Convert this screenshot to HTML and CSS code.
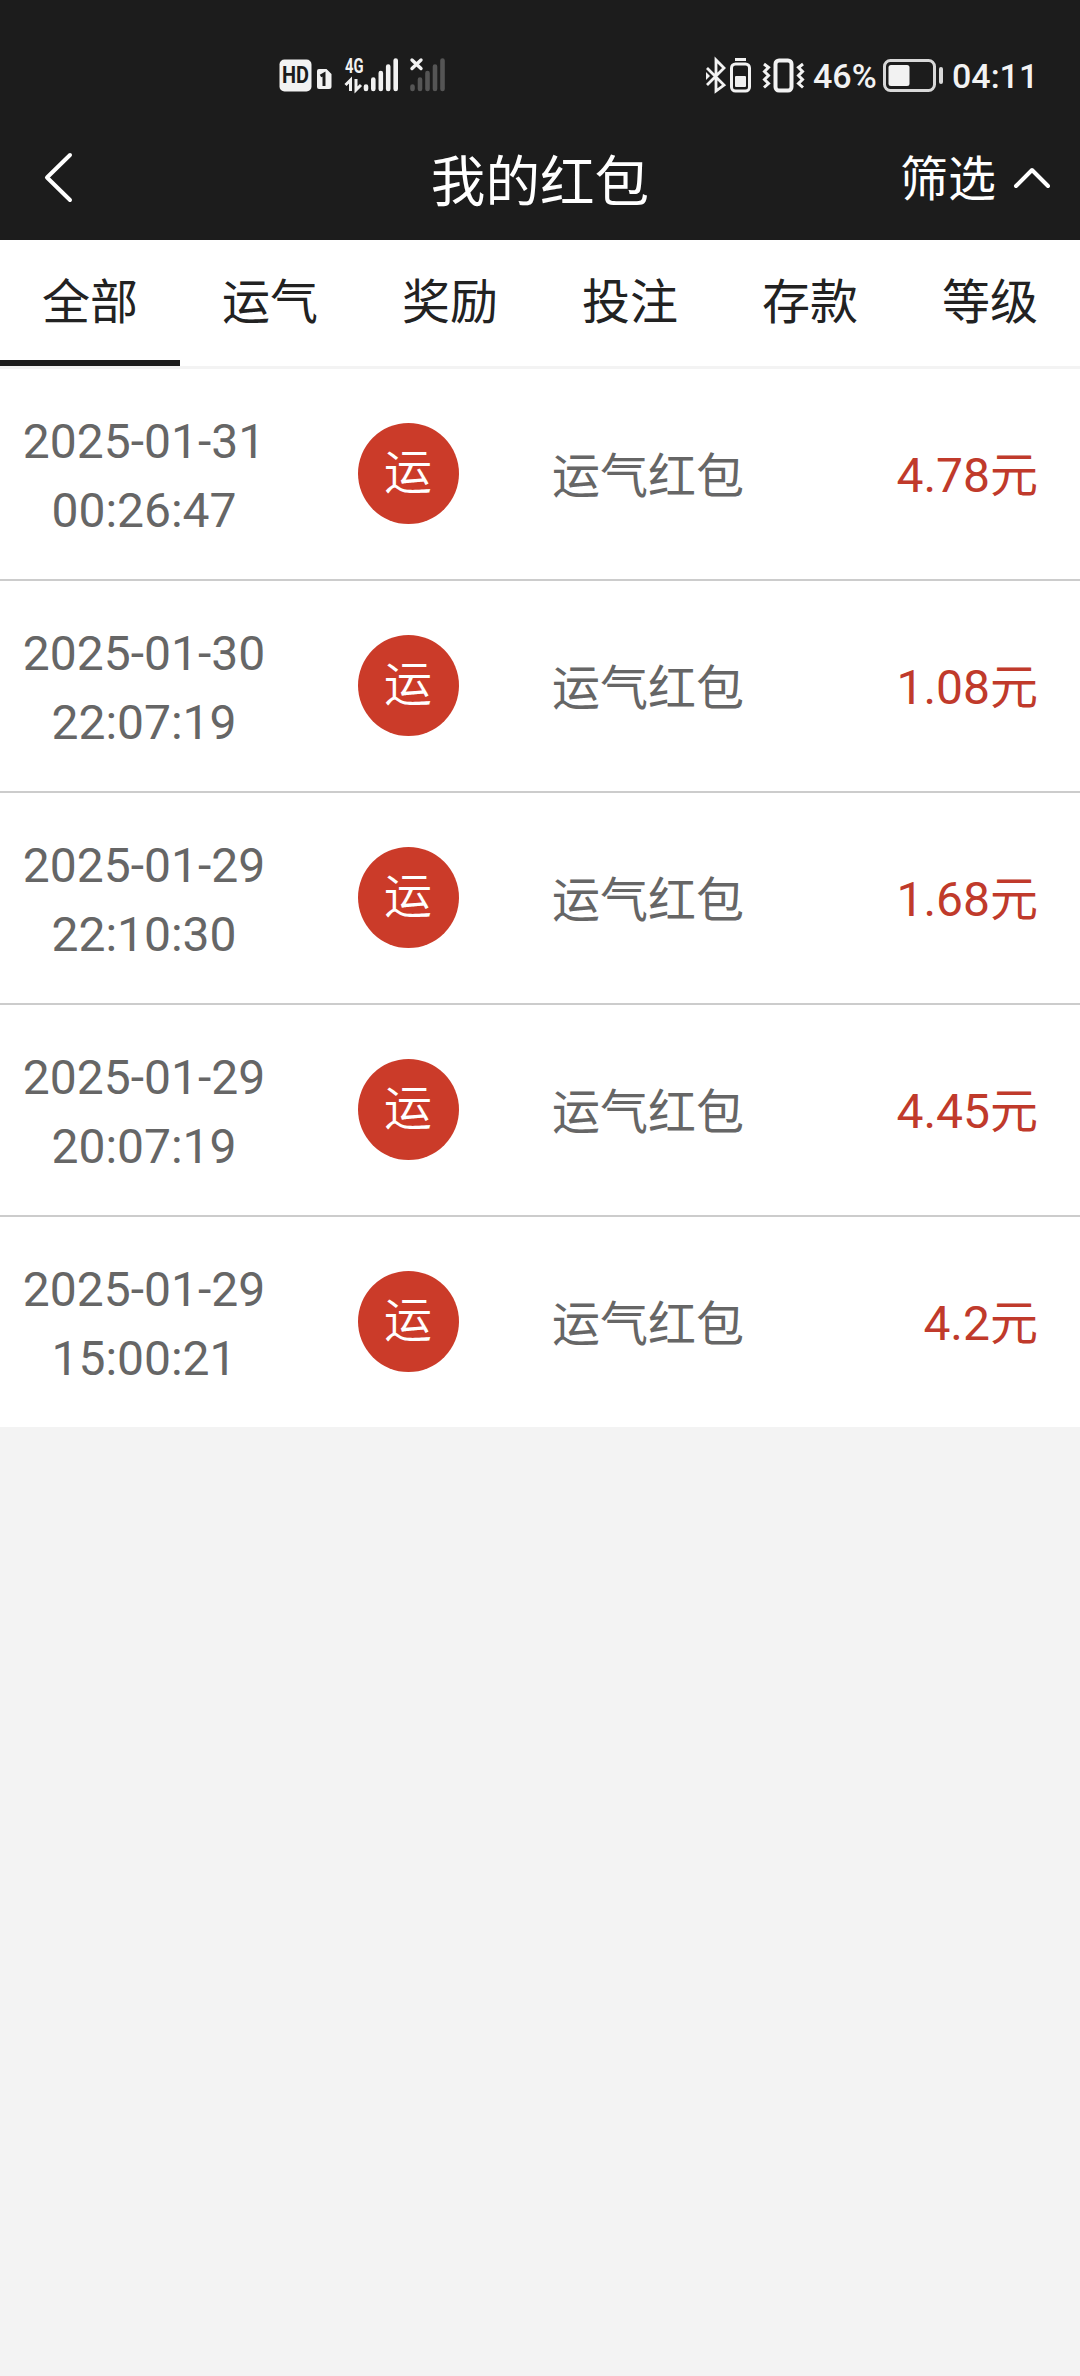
FILE: index.html
```html
<!DOCTYPE html>
<html lang="zh-CN">
<head>
<meta charset="utf-8">
<title>我的红包</title>
<link rel="stylesheet" href="styles.css">
</head>
<body>
<header class="top">
  <div class="status">
    <svg class="signals" width="170" height="40" viewBox="277 55 170 40">
      <rect x="279.5" y="59.5" width="32" height="32" rx="5" fill="#f2f2f2"/>
      <text x="295.5" y="82.5" class="hd" text-anchor="middle" textLength="27" lengthAdjust="spacingAndGlyphs">HD</text>
      <path d="M319 69h7.500l5 5v12.500a2.500 2.500 0 0 1-2.500 2.500h-10a2 2 0 0 1-2-2V71a2 2 0 0 1 2-2z" fill="#f2f2f2"/>
      <path d="M320.500 76l3.500-2v12" fill="none" stroke="#1c1c1c" stroke-width="3"/>
      <text x="345" y="72.500" class="net" textLength="18.500" lengthAdjust="spacingAndGlyphs">4G</text>
      <path d="M345.500 85l5-5v11M356 79v11l5-5" fill="none" stroke="#f2f2f2" stroke-width="3"/>
      <path d="M366 86.500v2.500M373.300 79.500V89M380.800 73V89M388.200 66.500V89M395.700 60.500V89" class="bars"/>
      <path d="M412 60l9 8.500M421 60l-9 8.500" stroke="#f2f2f2" stroke-width="3.400" stroke-linecap="round"/>
      <path d="M412.500 86.500v2.500M420 79.500V89M427.500 73V89M435 66.500V89M442.500 60.500V89" class="bars dim"/>
    </svg>
    <div class="status-right">
      <svg width="102" height="40" viewBox="704 55 102 40" fill="none" stroke="#f2f2f2">
        <path d="M707 68l17 17-8 6V60l8 8-17 17" stroke-width="2.800"/>
        <path d="M706 72v8l4-4z" fill="#f2f2f2" stroke="none"/>
        <path d="M735 59.500h11" stroke-width="3"/>
        <rect x="731.500" y="64" width="18" height="27" rx="4" stroke-width="3"/>
        <rect x="735" y="76" width="11" height="11" rx="1" fill="#f2f2f2" stroke="none"/>
        <rect x="775.500" y="60.500" width="16" height="30" rx="3.500" stroke-width="4"/>
        <path d="M764 64l4.500 3.500-4 4 4 4-4 4 4 4-4.500 4M803 64l-4.500 3.500 4 4-4 4 4 4-4 4 4.500 4" stroke-width="3"/>
      </svg>
      <span class="percent">46%</span>
      <svg class="battery" width="62" height="40" viewBox="882 55 62 40">
        <rect x="884.500" y="60.500" width="50" height="30" rx="6" fill="none" stroke="#d8d8d8" stroke-width="3"/>
        <rect x="888.500" y="65" width="21" height="21" rx="2.500" fill="#f2f2f2"/>
        <path d="M941 69v13" stroke="#d8d8d8" stroke-width="4" stroke-linecap="round"/>
      </svg>
      <span class="clock">04:11</span>
    </div>
  </div>
  <nav class="bar">
    <svg class="back" width="30" height="52" viewBox="0 0 30 52"><path d="M27 3L4 25.500 27 48"/></svg>
    <h1 class="title">我的红包</h1>
    <div class="filter"><span class="filter-label">筛选</span>
      <svg class="up" width="40" height="24" viewBox="0 0 40 24"><path d="M4 20L20 4l16 16"/></svg>
    </div>
  </nav>
</header>
<nav class="tabs">
  <span class="tab active">全部</span>
  <span class="tab">运气</span>
  <span class="tab">奖励</span>
  <span class="tab">投注</span>
  <span class="tab">存款</span>
  <span class="tab">等级</span>
</nav>
<main class="list">
  <div class="row"><time class="date">2025-01-31<br>00:26:47</time><span class="badge">运</span><span class="name">运气红包</span><span class="amount">4.78元</span></div>
  <div class="row"><time class="date">2025-01-30<br>22:07:19</time><span class="badge">运</span><span class="name">运气红包</span><span class="amount">1.08元</span></div>
  <div class="row"><time class="date">2025-01-29<br>22:10:30</time><span class="badge">运</span><span class="name">运气红包</span><span class="amount">1.68元</span></div>
  <div class="row"><time class="date">2025-01-29<br>20:07:19</time><span class="badge">运</span><span class="name">运气红包</span><span class="amount">4.45元</span></div>
  <div class="row"><time class="date">2025-01-29<br>15:00:21</time><span class="badge">运</span><span class="name">运气红包</span><span class="amount">4.2元</span></div>
</main>
</body>
</html>
```
FILE: styles.css
```css
* { box-sizing: border-box; }
body {
  margin: 0;
  min-height: 2376px;
  background: #f3f3f3;
  font-family: Roboto, "Noto Sans CJK SC", sans-serif;
  font-size: 48px;
  color: #222;
}
.top { height: 240px; background: #1c1c1c; color: #fff; }
.status {
  display: flex;
  justify-content: space-between;
  align-items: center;
  height: 120px;
  padding: 30px 44px 0 277px;
  color: #f2f2f2;
  font-size: 34px;
  font-weight: 500;
}
.status-right { display: flex; align-items: center; }
.percent { width: 69px; margin-left: 7px; line-height: 40px; padding-top: 1px; }
.clock { width: 84px; margin-left: 8px; line-height: 40px; padding-top: 1px; white-space: nowrap; }
.hd { font: bold 23px Roboto, sans-serif; fill: #1c1c1c; }
.net { font: bold 20px Roboto, sans-serif; fill: #f2f2f2; }
.bars { fill: none; stroke: #f2f2f2; stroke-width: 4.6; stroke-linecap: round; }
.dim { stroke: #555; }
.bar {
  display: grid;
  grid-template-columns: 1fr auto 1fr;
  align-items: center;
  height: 120px;
  padding: 0 28px 4px 43px;
}
.back, .up { fill: none; stroke: #fff; stroke-width: 4; stroke-linecap: round; stroke-linejoin: round; }
.title { margin: 0 0 0 -15px; font-size: 54.6px; font-weight: 400; line-height: 80px; padding-top: 8px; }
.filter { display: flex; justify-content: flex-end; align-items: center; gap: 16px; line-height: 72px; }
.filter-label { padding-top: 4px; }
.tabs {
  display: grid;
  grid-template-columns: repeat(6, 1fr);
  height: 129px;
  background: #fff;
  border-bottom: 3px solid #f3f3f3;
}
.tab { text-align: center; line-height: 126px; height: 126px; }
.active { border-bottom: 6px solid #1c1c1c; }
.list { background: #fff; }
.row {
  display: grid;
  grid-template-columns: 288px 240px 240px 312px;
  align-items: center;
  height: 212px;
  border-bottom: 2px solid #ccc;
  color: #666;
}
.row:last-child { height: 210px; border-bottom: 0; }
.date { text-align: center; line-height: 69px; padding-top: 3px; }
.badge {
  justify-self: center;
  width: 101px;
  height: 101px;
  margin-bottom: 2px;
  border-radius: 50%;
  background: #cb3b29;
  color: #fff;
  font-weight: 350;
  line-height: 99px;
  text-align: center;
}
.name { text-align: center; white-space: nowrap; line-height: 72px; padding-top: 5px; }
.amount { padding: 4px 42px 0 0; text-align: right; color: #c03a2b; line-height: 72px; }
```
